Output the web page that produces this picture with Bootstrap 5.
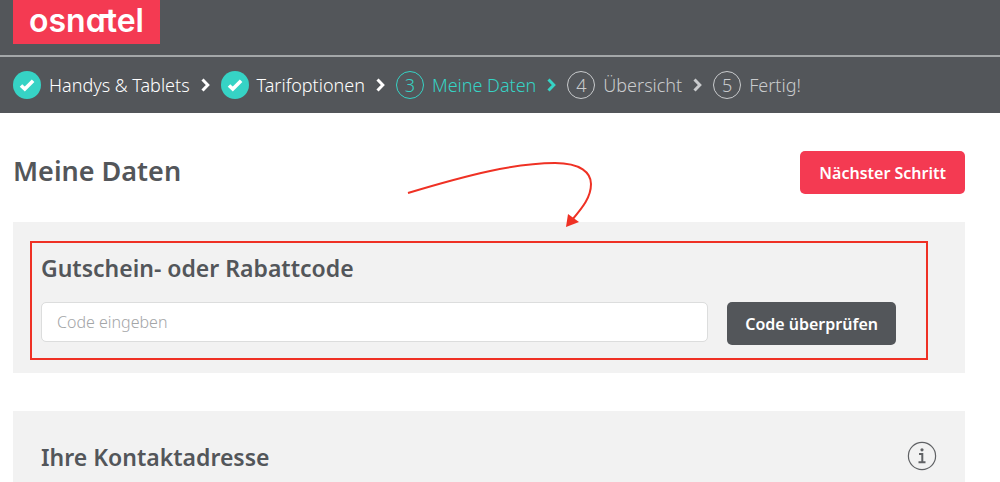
<!DOCTYPE html>
<html lang="de">
<head>
<meta charset="utf-8">
<meta name="viewport" content="width=device-width, initial-scale=1">
<title>osnatel – Meine Daten</title>
<link href="https://cdn.jsdelivr.net/npm/bootstrap@5.3.0/dist/css/bootstrap.min.css" rel="stylesheet">
<style>
  :root { --slate: #53565a; --brand: #f43a52; --mint: #36d3c5; --marker: #ef3124; }
  body { font-family: "Noto Sans", "Open Sans", sans-serif; color: var(--slate); overflow: hidden; }
  .page-gutter { padding-left: 13px; padding-right: 35px; }
  .topbar { background: var(--slate); }
  .brand-row { height: 57px; border-bottom: 2px solid #a4a7a9; }
  .brand-logo { position: relative; width: 147px; height: 44px; background: var(--brand); color: #fff;
    font: 600 32px/42px Inter, sans-serif; font-feature-settings: "cv11"; text-align: center; text-decoration: none; }
  .brand-logo::after { content: ""; position: absolute; left: 88px; top: 14px; width: 12px; height: 4px; background: #fff; }
  .step-list { height: 56px; font-size: 18px; font-weight: 300; line-height: 28px; color: #c9cbcd; }
  .step-list li { gap: 8px; white-space: nowrap; }
  .step-list a { color: #fff; text-decoration: none; }
  .step-current { color: var(--mint); }
  .step-dot { width: 28px; height: 28px; border: 1px solid currentColor; border-radius: 50%; line-height: 27px; text-align: center; }
  .step-done { border: 0; background: var(--mint); }
  .chevron { width: 9px; height: 14px; margin: 0 3px; fill: none; stroke: currentColor; stroke-width: 3; }
  .title-row { padding-top: 38px; padding-bottom: 28px; }
  h1 { font-size: 27px; font-weight: 600; line-height: 40px; }
  h2 { font-size: 23px; font-weight: 600; line-height: 32px; }
  .btn-form { font-size: 16px; font-weight: 600; line-height: 24px; padding: 9px 18px; border: 0; border-radius: 5px; color: #fff; height: 43px; }
  .btn-brand, .btn-brand:hover { background: var(--brand); color: #fff; padding-left: 19px; padding-right: 19px; }
  .btn-slate, .btn-slate:hover { background: var(--slate); color: #fff; }
  .panel { background: #f2f2f2; padding: 30px 28px; }
  .panel + .panel { margin-top: 38px; }
  .voucher { padding-right: 69px; padding-bottom: 28px; }
  .voucher form { gap: 19px; padding-top: 18px; }
  .code-input { height: 40px; font-weight: 300; border: 1px solid #dcdddd; border-radius: 5px; padding: 6px 15px; }
  .code-input::placeholder { color: #a3a5a7; }
  .marker-frame { position: absolute; inset: 19px 37px 13px 17px; border: 2px solid var(--marker); pointer-events: none; }
  .marker-arrow { position: absolute; top: -66px; right: 365px; width: 200px; height: 80px; pointer-events: none; }
  .info-btn { width: 30px; height: 30px; color: #606265; }
</style>
</head>
<body>
<header class="topbar">
  <div class="brand-row page-gutter">
    <a class="brand-logo d-block" href="#">osnatel</a>
  </div>
  <nav class="page-gutter" aria-label="Bestellschritte">
    <ol class="step-list list-unstyled d-flex align-items-center gap-2 mb-0">
      <li class="d-flex align-items-center text-white"><span class="step-dot step-done"><svg class="d-block" width="28" height="28" viewBox="0 0 28 28" fill="none" stroke="#fff" stroke-width="3.6"><path d="m8 14.5 3.8 3.6 8.3-8.4"/></svg></span><a href="#">Handys &amp; Tablets</a></li>
      <li class="text-white d-flex" aria-hidden="true"><svg class="chevron" viewBox="0 0 9 14"><path d="m1.5 1.5 5.3 5.5-5.3 5.5"/></svg></li>
      <li class="d-flex align-items-center text-white"><span class="step-dot step-done"><svg class="d-block" width="28" height="28" viewBox="0 0 28 28" fill="none" stroke="#fff" stroke-width="3.6"><path d="m8 14.5 3.8 3.6 8.3-8.4"/></svg></span><a href="#">Tarifoptionen</a></li>
      <li class="text-white d-flex" aria-hidden="true"><svg class="chevron" viewBox="0 0 9 14"><path d="m1.5 1.5 5.3 5.5-5.3 5.5"/></svg></li>
      <li class="d-flex align-items-center step-current" aria-current="step"><span class="step-dot">3</span><span>Meine Daten</span></li>
      <li class="d-flex step-current" aria-hidden="true"><svg class="chevron" viewBox="0 0 9 14"><path d="m1.5 1.5 5.3 5.5-5.3 5.5"/></svg></li>
      <li class="d-flex align-items-center"><span class="step-dot">4</span><span>Übersicht</span></li>
      <li class="d-flex" aria-hidden="true"><svg class="chevron" viewBox="0 0 9 14"><path d="m1.5 1.5 5.3 5.5-5.3 5.5"/></svg></li>
      <li class="d-flex align-items-center"><span class="step-dot">5</span><span>Fertig!</span></li>
    </ol>
  </nav>
</header>
<main class="page-gutter">
  <div class="title-row d-flex justify-content-between align-items-start">
    <h1 class="mb-0">Meine Daten</h1>
    <button type="button" class="btn btn-form btn-brand">Nächster Schritt</button>
  </div>
  <section class="panel voucher position-relative">
    <h2 class="mb-0"><label for="code">Gutschein- oder Rabattcode</label></h2>
    <form class="d-flex align-items-start">
      <input id="code" type="text" class="form-control code-input flex-grow-1" placeholder="Code eingeben">
      <button type="button" class="btn btn-form btn-slate flex-shrink-0">Code überprüfen</button>
    </form>
    <div class="marker-frame"></div>
    <svg class="marker-arrow" viewBox="0 0 200 80" aria-hidden="true">
      <path d="M8 37C68 19 115 7 155 7C181 7 191 17 191 28C191 41 183 51 172 64" fill="none" stroke="#ef3124" stroke-width="2"/>
      <path d="M166 71l2-13 11 8z" fill="#ef3124"/>
    </svg>
  </section>
  <section class="panel d-flex justify-content-between align-items-start">
    <h2 class="mb-0">Ihre Kontaktadresse</h2>
    <button type="button" class="info-btn btn p-0 border-0" aria-label="Information"><svg class="d-block" width="30" height="30" viewBox="0 0 30 30" fill="none" stroke="currentColor"><circle cx="15" cy="15" r="13.6" stroke-width="1.2"/><circle cx="15" cy="8.8" r="1.6" fill="currentColor" stroke="none"/><path d="M12 13h3.3v8M11.5 21.2h7" stroke-width="2"/></svg></button>
  </section>
</main>
<script src="https://cdn.jsdelivr.net/npm/bootstrap@5.3.0/dist/js/bootstrap.bundle.min.js"></script>
</body>
</html>
